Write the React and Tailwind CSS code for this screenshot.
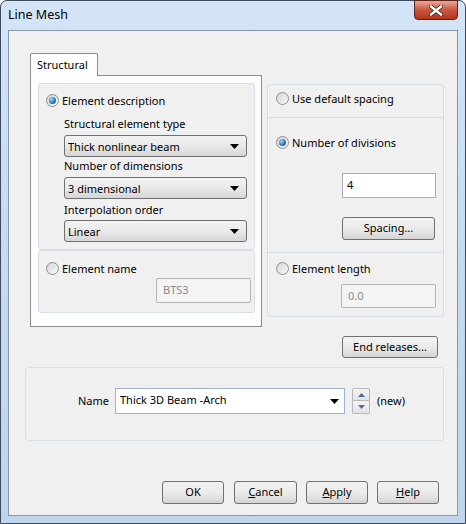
import React from "react";

const Radio = ({ checked }) => (
  <span className="w-[13px] h-[13px] rounded-full border border-[#8e8f8f] bg-linear-to-br from-[#d4d4d4] to-[#fafafa] flex items-center justify-center shrink-0">
    {checked && (
      <span className="w-[7px] h-[7px] rounded-full bg-[radial-gradient(circle_at_35%_35%,#9fdcff,#2a73c0_55%,#174f8f)]" />
    )}
  </span>
);

const Arrow = () => (
  <svg width="9" height="5" viewBox="0 0 9 5" className="shrink-0">
    <path d="M0 0 H9 L4.5 5 Z" fill="#000" />
  </svg>
);

const Select = ({ children }) => (
  <div className="h-[22px] w-[183px] rounded-[3px] border border-[#707070] bg-linear-to-b from-[#f3f3f3] via-[#e9e9e9] to-[#d6d6d6] flex items-center pl-[3px] pr-[7px]">
    <span className="flex-1 leading-none">{children}</span>
    <Arrow />
  </div>
);

const Button = ({ children, w = "w-[62px]", h = "h-[23px]", className = "" }) => (
  <div
    className={`${w} ${h} ${className} rounded-[3px] border border-[#707070] bg-linear-to-b from-[#f2f2f2] via-[#ebebeb] to-[#d4d4d4] flex items-center justify-center shrink-0`}
  >
    {children}
  </div>
);

const RadioRow = ({ checked, children, className = "" }) => (
  <div className={`h-[16px] flex items-center gap-[3px] ${className}`}>
    <Radio checked={checked} />
    <span className="leading-none">{children}</span>
  </div>
);

export default function App() {
  return (
    <div className="w-[466px] h-[524px] font-['Noto_Sans',sans-serif] text-[11px] text-black">
      <div className="w-full h-full flex flex-col rounded-t-[7px] border border-[#3b4a5c] bg-linear-to-b from-[#d3e5f7] via-[#c6dbf0] to-[#bfd5ec]">
        {/* Title bar */}
        <div className="h-[29px] flex items-start shrink-0">
          <span className="pl-[7px] pt-[6px] text-[12.5px] leading-[16px]">Line Mesh</span>
          <div className="ml-auto mr-[7px] -mt-px w-[44px] h-[20px] rounded-b-[4px] border border-[#5b231a] bg-linear-to-b from-[#e8a898] via-[#c9553f] to-[#b5341c] flex items-center justify-center">
            <svg width="14" height="11" viewBox="0 0 14 11">
              <path d="M2 1.5 L12 9.5 M12 1.5 L2 9.5" stroke="#4a1a12" strokeWidth="4" strokeLinecap="square" />
              <path d="M2 1.5 L12 9.5 M12 1.5 L2 9.5" stroke="#ffffff" strokeWidth="2.4" strokeLinecap="square" />
            </svg>
          </div>
        </div>

        {/* Client area */}
        <div className="mx-[7px] mb-[7px] flex-1 border border-[#8796a6] bg-[#f0f0f0] flex flex-col">
          {/* Top row */}
          <div className="flex pl-[21px] pt-[22px]">
            {/* Left: tab control */}
            <div className="w-[232px] flex flex-col">
              <div className="relative z-10 -mb-px w-[68px] h-[23px] border border-b-0 border-[#898c95] bg-white rounded-t-[2px] flex items-center pl-[6px]">
                Structural
              </div>
              <div className="h-[252px] border border-[#898c95] bg-[#fdfdfd] pt-[7px] pl-[7px] pr-[6px] pb-[13px] flex flex-col">
                {/* upper group */}
                <div className="h-[167px] border border-[#d5dfe5] rounded-[3px] bg-[#f0f0f0] flex flex-col pt-[8px] pl-[7px]">
                  <RadioRow checked>Element description</RadioRow>
                  <div className="ml-[18px] mt-[8px] h-[16px] leading-[16px]">Structural element type</div>
                  <div className="ml-[18px] mt-[3px]"><Select>Thick nonlinear beam</Select></div>
                  <div className="ml-[18px] mt-[1px] h-[16px] leading-[16px]">Number of dimensions</div>
                  <div className="ml-[18px] mt-[3px]"><Select>3 dimensional</Select></div>
                  <div className="ml-[18px] mt-[3px] h-[16px] leading-[16px]">Interpolation order</div>
                  <div className="ml-[18px] mt-[2px]"><Select>Linear</Select></div>
                </div>
                {/* lower group */}
                <div className="h-[63px] border border-[#d5dfe5] rounded-[3px] bg-[#f0f0f0] flex flex-col pt-[9px] pl-[7px]">
                  <RadioRow>Element name</RadioRow>
                  <div className="ml-[110px] mt-[2px] w-[95px] h-[25px] border border-[#b5b5b5] rounded-[2px] bg-[#f4f4f4] text-[#8a8a8a] flex items-center pl-[6px]">
                    BTS3
                  </div>
                </div>
              </div>
            </div>

            {/* Right column */}
            <div className="ml-[5px] mt-[31px] w-[177px] flex flex-col">
              <div className="border border-[#d5dfe5] rounded-[3px] bg-[#f0f0f0] flex flex-col">
                <div className="h-[32px] pt-[5px] pl-[8px]">
                  <RadioRow>Use default spacing</RadioRow>
                </div>
                <div className="h-[135px] border-t border-[#d5dfe5] pt-[16px] pl-[8px] flex flex-col">
                  <RadioRow checked>Number of divisions</RadioRow>
                  <div className="ml-[66px] mt-[23px] w-[94px] h-[25px] border border-[#abadb3] bg-white flex items-center pl-[4px]">
                    4
                  </div>
                  <Button w="w-[93px]" className="ml-[66px] mt-[19px]">Spacing...</Button>
                </div>
                <div className="h-[64px] border-t border-[#d5dfe5] pt-[7px] pl-[8px] flex flex-col">
                  <RadioRow>Element length</RadioRow>
                  <div className="ml-[65px] mt-[8px] w-[95px] h-[24px] border border-[#b5b5b5] rounded-[2px] bg-[#f4f4f4] text-[#8a8a8a] flex items-center pl-[6px]">
                    0.0
                  </div>
                </div>
              </div>
              <Button w="w-[96px]" h="h-[22px]" className="ml-[75px] mt-[19px]">End releases...</Button>
            </div>
          </div>

          {/* Name group */}
          <div className="ml-[16px] mt-[9px] w-[419px] h-[74px] border border-[#d5dfe5] rounded-[3px] bg-[#f0f0f0] flex items-start pt-[20px] pl-[52px]">
            <span className="w-[37px] h-[26px] flex items-center">Name</span>
            <div className="w-[230px] h-[26px] border border-[#9bb5d3] bg-white flex items-start pt-[3px] pl-[4px] pr-[5px]">
              <span className="flex-1 leading-[16px]">Thick 3D Beam -Arch</span>
              <span className="mt-[7px]"><Arrow /></span>
            </div>
            <div className="ml-[7px] w-[18px] h-[26px] flex flex-col">
              <div className="h-[13px] border border-[#b8b8b8] rounded-t-[2px] bg-linear-to-b from-[#f6f6f6] to-[#e2e2e2] flex items-center justify-center">
                <svg width="7" height="4" viewBox="0 0 7 4"><path d="M0 4 L3.5 0 L7 4 Z" fill="#4a6fa5" /></svg>
              </div>
              <div className="h-[13px] border border-t-0 border-[#b8b8b8] rounded-b-[2px] bg-linear-to-b from-[#f6f6f6] to-[#e2e2e2] flex items-center justify-center">
                <svg width="7" height="4" viewBox="0 0 7 4"><path d="M0 0 H7 L3.5 4 Z" fill="#4a6fa5" /></svg>
              </div>
            </div>
            <span className="ml-[7px] h-[26px] flex items-center">(new)</span>
          </div>

          {/* Buttons */}
          <div className="mt-[40px] flex justify-end pr-[18px]">
            <Button>OK</Button>
            <Button w="w-[63px]" className="ml-[10px]"><span><u>C</u>ancel</span></Button>
            <Button className="ml-[9px]"><span><u>A</u>pply</span></Button>
            <Button className="ml-[9px]"><span><u>H</u>elp</span></Button>
          </div>
        </div>
      </div>
    </div>
  );
}
